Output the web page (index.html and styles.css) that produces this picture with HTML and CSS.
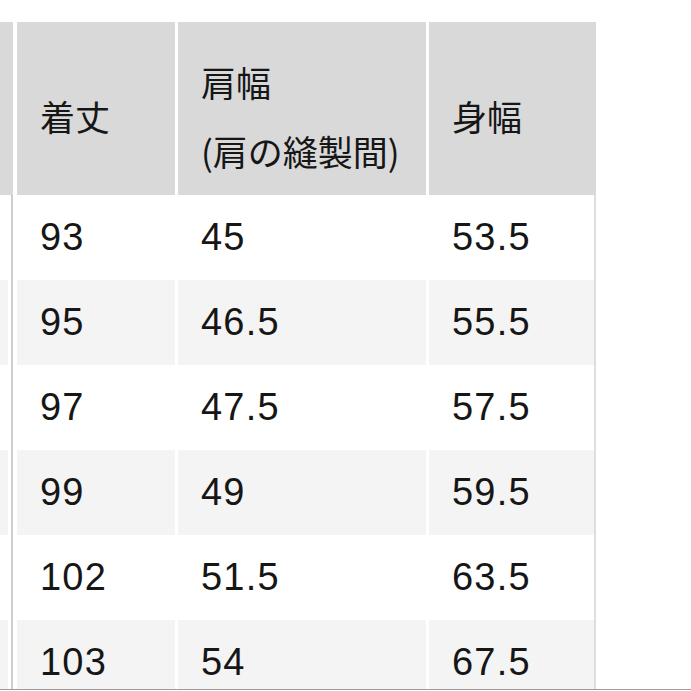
FILE: index.html
```html
<!DOCTYPE html>
<html lang="ja">
<head>
<meta charset="utf-8">
<link rel="stylesheet" href="styles.css">
</head>
<body>
<div class="frame">
  <div class="grid">
    <div class="cell head edge"></div>
    <div class="cell head"><span class="jp">着丈</span></div>
    <div class="cell head two"><span class="jp">肩幅</span><span class="jp">(肩の縫製間)</span></div>
    <div class="cell head"><span class="jp">身幅</span></div>

    <div class="cell edge odd"></div>
    <div class="cell odd">93</div>
    <div class="cell odd">45</div>
    <div class="cell odd last">53.5</div>

    <div class="cell edge even"></div>
    <div class="cell even">95</div>
    <div class="cell even">46.5</div>
    <div class="cell even last">55.5</div>

    <div class="cell edge odd"></div>
    <div class="cell odd">97</div>
    <div class="cell odd">47.5</div>
    <div class="cell odd last">57.5</div>

    <div class="cell edge even"></div>
    <div class="cell even">99</div>
    <div class="cell even">49</div>
    <div class="cell even last">59.5</div>

    <div class="cell edge odd"></div>
    <div class="cell odd">102</div>
    <div class="cell odd">51.5</div>
    <div class="cell odd last">63.5</div>

    <div class="cell edge even"></div>
    <div class="cell even">103</div>
    <div class="cell even">54</div>
    <div class="cell even last">67.5</div>
  </div>
</div>
</body>
</html>
```

FILE: styles.css
```css
html, body {
  margin: 0;
  padding: 0;
  background: #ffffff;
}

body {
  font-family: "Liberation Sans", "Noto Sans CJK JP", sans-serif;
  color: #161616;
}

.frame {
  margin-top: 22px;
  height: 667px;
  overflow: hidden;
  border-bottom: 1px solid #9c9c9c;
}

.grid {
  display: grid;
  grid-template-columns: 14px 158px 248px 167px;
  grid-template-rows: 173px;
  grid-auto-rows: 85px;
  column-gap: 3px;
  width: 596px;
}

.cell {
  box-sizing: border-box;
  display: flex;
  align-items: center;
  padding-left: 23px;
  font-size: 38px;
  letter-spacing: 1.2px;
}

.head {
  background: #d9d9d9;
  flex-direction: column;
  justify-content: center;
  align-items: flex-start;
  padding-top: 14px;
}

.jp {
  font-family: "Noto Sans CJK JP", sans-serif;
  font-size: 35px;
  letter-spacing: 0;
  line-height: 69px;
}

.odd {
  background: #ffffff;
}

.even {
  background: #f4f4f4;
}

.edge {
  padding: 0;
}

.head.edge {
  background: linear-gradient(to right, #d9d9d9 0 13px, #ffffff 13px);
}

.edge.odd {
  background: linear-gradient(to right, #ffffff 0 11px, #cdcdcd 11px 13px, #ffffff 13px);
}

.edge.even {
  background: linear-gradient(to right, #f4f4f4 0 8px, #ffffff 8px 11px, #cdcdcd 11px 13px, #ffffff 13px);
}

.last {
  border-right: 2px solid #dedede;
}
```
